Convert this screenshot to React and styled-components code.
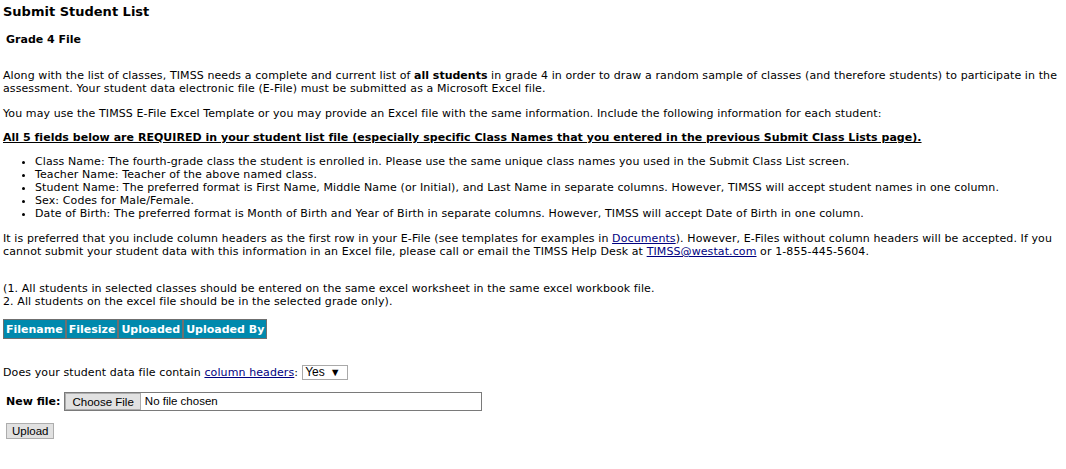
import React from 'react';
import styled, { createGlobalStyle } from 'styled-components';

const GlobalStyle = createGlobalStyle`
  body {
    margin: 0;
    background: #fff;
    color: #000;
    font-family: "DejaVu Sans", Verdana, sans-serif;
    font-size: 11px;
  }
`

const Page = styled.div`
  padding: 3px 3px 20px 3px;
  line-height: 13px;
`

const Title = styled.h1`
  margin: 0;
  font-size: 13px;
  line-height: 17px;
  font-weight: bold;
`

const SubTitle = styled.h2`
  margin: 13px 0 0 3px;
  font-size: 11px;
  line-height: 13px;
  font-weight: bold;
`

const Para = styled.p`
  margin: ${props => props.top || 11}px 0 0 0;
  letter-spacing: 0.1px;
  b { letter-spacing: 0; }
`

const Required = styled.p`
  margin: 11px 0 0 0;
  font-weight: bold;
  text-decoration: underline;
  letter-spacing: 0.03px;
`

const FieldList = styled.ul`
  margin: 11px 0 0 0;
  padding-left: 32px;
  list-style: disc;
  letter-spacing: 0.1px;
  li { line-height: 13px; }
`

const Link = styled.a`
  color: #000080;
  text-decoration: underline;
`

const FileTable = styled.table`
  margin-top: 11px;
  border-collapse: separate;
  border-spacing: 0;
  th {
    background: #0089ad;
    color: #fff;
    font-weight: bold;
    font-size: 11px;
    line-height: 13px;
    padding: 3px 2px 2px 2px;
    border: 1px solid #6f6f6f;
    text-align: left;
    white-space: nowrap;
  }
`

const HeaderQuestion = styled.div`
  margin-top: 26px;
  display: flex;
  align-items: center;
  letter-spacing: 0.1px;
`

const FakeSelect = styled.span`
  display: inline-flex;
  align-items: center;
  margin-left: 4px;
  width: 42px;
  height: 13px;
  border: 1px solid #a9a9a9;
  font-family: "Liberation Sans", Arial, sans-serif;
  font-size: 12px;
  letter-spacing: 0;
  padding-left: 2px;
  gap: 5px;
  span { font-size: 11px; }
`

const FileRow = styled.div`
  margin-top: 12px;
  display: flex;
  align-items: center;
  padding-left: 3px;
  gap: 4px;
  label { font-weight: bold; }
`

const FileBox = styled.div`
  width: 416px;
  height: 17px;
  border: 1px solid #7a7a7a;
  display: flex;
  align-items: center;
  font-family: "Liberation Sans", Arial, sans-serif;
  font-size: 11.5px;
  gap: 4px;
`

const GrayButton = styled.button`
  font-family: "Liberation Sans", Arial, sans-serif;
  font-size: 11.5px;
  background: #e1e1e1;
  border: 1px solid #adadad;
  color: #000;
  padding: 0 ${props => props.px || 6}px;
  height: ${props => props.h || 17}px;
  line-height: 14px;
  margin: 0;
`

const UploadRow = styled.div`
  margin-top: 12px;
  padding-left: 3px;
`

export default function App() {
  return (
    <Page>
      <GlobalStyle />
      <Title>Submit Student List</Title>
      <SubTitle>Grade 4 File</SubTitle>
      <Para top={23}>
        Along with the list of classes, TIMSS needs a complete and current list of <b>all students</b> in grade 4 in order to draw a random sample of classes (and therefore students) to participate in the assessment. Your student data electronic file (E-File) must be submitted as a Microsoft Excel file.
      </Para>
      <Para top={12}>You may use the TIMSS E-File Excel Template or you may provide an Excel file with the same information. Include the following information for each student:</Para>
      <Required>All 5 fields below are REQUIRED in your student list file (especially specific Class Names that you entered in the previous Submit Class Lists page).</Required>
      <FieldList>
        <li>Class Name: The fourth-grade class the student is enrolled in. Please use the same unique class names you used in the Submit Class List screen.</li>
        <li>Teacher Name: Teacher of the above named class.</li>
        <li>Student Name: The preferred format is First Name, Middle Name (or Initial), and Last Name in separate columns. However, TIMSS will accept student names in one column.</li>
        <li>Sex: Codes for Male/Female.</li>
        <li>Date of Birth: The preferred format is Month of Birth and Year of Birth in separate columns. However, TIMSS will accept Date of Birth in one column.</li>
      </FieldList>
      <Para top={12}>
        It is preferred that you include column headers as the first row in your E-File (see templates for examples in <Link href="#">Documents</Link>). However, E-Files without column headers will be accepted. If you cannot submit your student data with this information in an Excel file, please call or email the TIMSS Help Desk at <Link href="#">TIMSS@westat.com</Link> or 1-855-445-5604.
      </Para>
      <Para top={24}>
        (1. All students in selected classes should be entered on the same excel worksheet in the same excel workbook file.<br />
        2. All students on the excel file should be in the selected grade only).
      </Para>
      <FileTable>
        <thead>
          <tr>
            <th>Filename</th>
            <th>Filesize</th>
            <th>Uploaded</th>
            <th>Uploaded By</th>
          </tr>
        </thead>
      </FileTable>
      <HeaderQuestion>
        Does your student data file contain&nbsp;<Link href="#">column headers</Link>:
        <FakeSelect>Yes <span>▼</span></FakeSelect>
      </HeaderQuestion>
      <FileRow>
        <label>New file:</label>
        <FileBox>
          <GrayButton h={17} px={6}>Choose File</GrayButton>
          <span>No file chosen</span>
        </FileBox>
      </FileRow>
      <UploadRow>
        <GrayButton h={16} px={5}>Upload</GrayButton>
      </UploadRow>
    </Page>
  );
}
